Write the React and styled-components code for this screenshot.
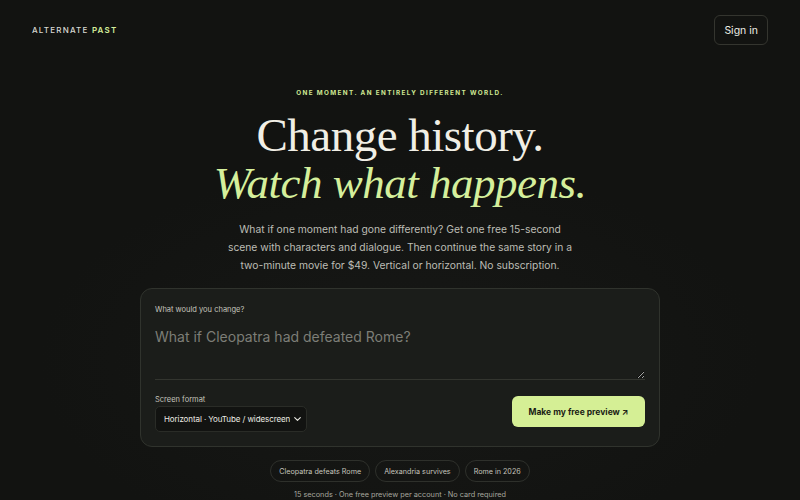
import React from "react";
import styled, { createGlobalStyle } from "styled-components";

const GlobalStyle = createGlobalStyle`
  * { box-sizing: border-box; }
  html, body { margin: 0; padding: 0; background: #121311; }
  body { font-family: "Inter", "Noto Sans", sans-serif; color: #ecebe4; }
`;

const Page = styled.div`
  width: 800px;
  height: 500px;
  overflow: hidden;
  display: flex;
  flex-direction: column;
  background: radial-gradient(ellipse 360px 200px at 400px 360px, #171816 0%, #121311 100%);
`;

const Nav = styled.header`
  display: flex;
  align-items: center;
  justify-content: space-between;
  padding: 15px 32px 0 32px;
  height: 45px;
`;

const Logo = styled.div`
  font-size: 8px;
  letter-spacing: 1.2px;
  font-weight: 500;
  color: #d8d8d2;

  & span {
    color: #d5ee9b;
    font-weight: 600;
  }
`;

const SignIn = styled.button`
  height: 30px;
  padding: 0 9px;
  background: transparent;
  border: 1px solid #34352f;
  border-radius: 6px;
  color: #ecebe4;
  font-family: inherit;
  font-size: 10.5px;
`;

const Hero = styled.main`
  display: flex;
  flex-direction: column;
  align-items: center;
  padding-top: 44px;
`;

const Eyebrow = styled.div`
  font-size: 6.3px;
  font-weight: 700;
  letter-spacing: 1.4px;
  color: #cfe893;
`;

const Title = styled.h1`
  margin: 14px 0 0 0;
  font-family: "Liberation Serif", "DejaVu Serif", serif;
  font-weight: 400;
  font-size: 47px;
  line-height: 48px;
  text-align: center;
  color: #f1efe6;
  letter-spacing: -0.5px;
`;

const Accent = styled.em`
  display: block;
  color: #d5ef9c;
  font-style: italic;
  font-size: 45px;
`;

const Lead = styled.p`
  margin: 13px 0 0 0;
  width: 380px;
  text-align: center;
  font-size: 10.3px;
  line-height: 18px;
  color: #bdbdb5;
`;

const Card = styled.form`
  margin-top: 14px;
  width: 520px;
  padding: 16px 14px 14px 14px;
  background: #1b1d1a;
  border: 1px solid #30332d;
  border-radius: 12px;
  display: flex;
  flex-direction: column;
`;

const Label = styled.label`
  font-size: 7.5px;
  color: #c4c4bc;
`;

const Prompt = styled.textarea`
  margin-top: 14px;
  height: 52px;
  resize: vertical;
  background: transparent;
  border: none;
  border-bottom: 1px solid #33352f;
  color: #ecebe4;
  font-family: inherit;
  font-size: 14px;
  padding: 0;
  outline: none;

  &::placeholder {
    color: #7d7e77;
  }
`;

const Row = styled.div`
  margin-top: 15px;
  display: flex;
  align-items: flex-end;
  justify-content: space-between;
`;

const Field = styled.div`
  display: flex;
  flex-direction: column;
  gap: 2px;
`;

const SelectWrap = styled.div`
  position: relative;
  width: 152px;
`;

const Select = styled.select`
  width: 100%;
  height: 26px;
  appearance: none;
  background: #121311;
  border: 1px solid #2a2c27;
  border-radius: 5px;
  color: #ecebe4;
  font-family: inherit;
  font-size: 8px;
  letter-spacing: -0.1px;
  padding: 0 16px 0 8px;
`;

const Chevron = styled.svg`
  position: absolute;
  right: 6px;
  top: 10px;
  pointer-events: none;
`;

const Primary = styled.button`
  height: 31px;
  width: 133px;
  margin-bottom: 5px;
  background: #d5ef95;
  border: none;
  border-radius: 6px;
  color: #1a1c14;
  font-family: inherit;
  font-size: 8.5px;
  font-weight: 700;
`;

const Chips = styled.div`
  margin-top: 13px;
  display: flex;
  gap: 5px;
`;

const Chip = styled.button`
  height: 22px;
  padding: 0 8px;
  background: transparent;
  border: 1px solid #2e302b;
  border-radius: 11px;
  color: #c4c4bc;
  font-family: inherit;
  font-size: 7.2px;
`;

const Fine = styled.div`
  margin-top: 8px;
  font-size: 7.3px;
  color: #a6a69e;
`;

export default function App() {
  return (
    <>
      <GlobalStyle />
      <Page>
        <Nav>
          <Logo>
            ALTERNATE <span>PAST</span>
          </Logo>
          <SignIn>Sign in</SignIn>
        </Nav>
        <Hero>
          <Eyebrow>ONE MOMENT. AN ENTIRELY DIFFERENT WORLD.</Eyebrow>
          <Title>
            Change history.
            <Accent>Watch what happens.</Accent>
          </Title>
          <Lead>
            What if one moment had gone differently? Get one free 15-second
            <br />
            scene with characters and dialogue. Then continue the same story in a
            <br />
            two-minute movie for $49. Vertical or horizontal. No subscription.
          </Lead>
          <Card onSubmit={(e) => e.preventDefault()}>
            <Label>What would you change?</Label>
            <Prompt placeholder="What if Cleopatra had defeated Rome?" />
            <Row>
              <Field>
                <Label>Screen format</Label>
                <SelectWrap>
                  <Select defaultValue="h">
                    <option value="h">Horizontal · YouTube / widescreen</option>
                    <option value="v">Vertical · TikTok / Reels</option>
                  </Select>
                  <Chevron width="7" height="6" viewBox="0 0 10 6" fill="none">
                    <path d="M1 1l4 4 4-4" stroke="#ecebe4" strokeWidth="1.6" strokeLinecap="round" strokeLinejoin="round" />
                  </Chevron>
                </SelectWrap>
              </Field>
              <Primary type="submit">Make my free preview ↗</Primary>
            </Row>
          </Card>
          <Chips>
            <Chip>Cleopatra defeats Rome</Chip>
            <Chip>Alexandria survives</Chip>
            <Chip>Rome in 2026</Chip>
          </Chips>
          <Fine>15 seconds · One free preview per account · No card required</Fine>
        </Hero>
      </Page>
    </>
  );
}
